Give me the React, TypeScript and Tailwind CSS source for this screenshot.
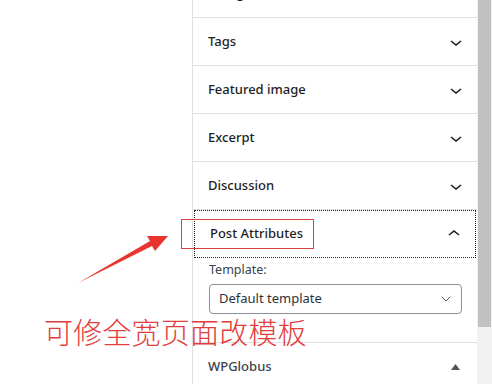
import { ChevronDown } from "lucide-react";

const rows = ["Categories", "Tags", "Featured image", "Excerpt", "Discussion"];

function WpChevron({ up = false }: { up?: boolean }) {
  return (
    <svg width="24" height="24" viewBox="0 0 24 24" className="text-[#1e1e1e]" fill="currentColor">
      {up ? (
        <path d="M6.5 12.4L12 8l5.5 4.4-.9 1.2L12 10l-4.6 3.6-1-1.2z" />
      ) : (
        <path d="M17.5 11.6L12 16l-5.5-4.4.9-1.2L12 14l4.6-3.6 1 1.2z" />
      )}
    </svg>
  );
}

function App() {
  return (
    <div className="relative w-[492px] h-[384px] overflow-hidden bg-white font-['Noto_Sans','Open_Sans',sans-serif] select-none">
      <div className="flex h-full">
        <div className="w-[192px] shrink-0 bg-white" />
        <div className="w-[285px] shrink-0 border-l border-[#e0e0e0] bg-white">
          <div className="-mt-[30px] flex flex-col">
            {rows.map((r) => (
              <div key={r} className="h-[48px] flex items-center justify-between pl-[15px] pr-[9px] border-b border-[#e0e0e0]">
                <span className="text-[13px] font-medium text-[#1e1e1e]">{r}</span>
                <WpChevron />
              </div>
            ))}
            <div className="pb-[28px] border-b border-[#e0e0e0]">
              <div className="h-[48px] flex items-center justify-between pl-[15px] pr-[9px] mx-[1px] border border-dotted border-[#1e1e1e]">
                <span className="text-[13px] font-medium text-[#1e1e1e]">Post Attributes</span>
                <WpChevron up />
              </div>
              <div className="pl-[16px] pr-[15px] pt-[3px]">
                <div className="text-[12.5px] text-[#3c434a] leading-[18px]">Template:</div>
                <div className="mt-[5px] h-[30px] flex items-center justify-between border border-[#8c8f94] rounded-[4px] pl-[9px] pr-[7px]">
                  <span className="text-[13px] text-[#2c3338]">Default template</span>
                  <ChevronDown size={16} strokeWidth={1.5} className="text-[#50575e]" />
                </div>
              </div>
            </div>
            <div className="h-[48px] flex items-center justify-between pl-[15px] pr-[17px]">
              <span className="text-[13px] font-medium text-[#3c434a]">WPGlobus</span>
              <svg width="9" height="6" viewBox="0 0 9 6">
                <path d="M0 6L4.5 0 9 6z" fill="#555" />
              </svg>
            </div>
          </div>
        </div>
        <div className="flex-1 bg-[#f1f1f1]">
          <div className="mx-[1px] w-[13px] h-[327px] bg-[#c1c1c1]" />
        </div>
      </div>

      {/* annotations */}
      <div className="absolute left-[181px] top-[219px] w-[133px] h-[30px] border border-[#d9403f]" />
      <svg className="absolute left-0 top-0" width="492" height="384">
        <path d="M78 283 L150 241 L147 236 L168 236 L155 251 L152 246 Z" fill="#e8362f" />
      </svg>
      <div className="absolute left-[44px] top-[311px] text-[29px] leading-[40px] tracking-[0.2px] text-[#e23d3d] font-['Noto_Sans_CJK_SC',serif] font-light">
        可修全宽页面改模板
      </div>
    </div>
  );
}

export default App;
